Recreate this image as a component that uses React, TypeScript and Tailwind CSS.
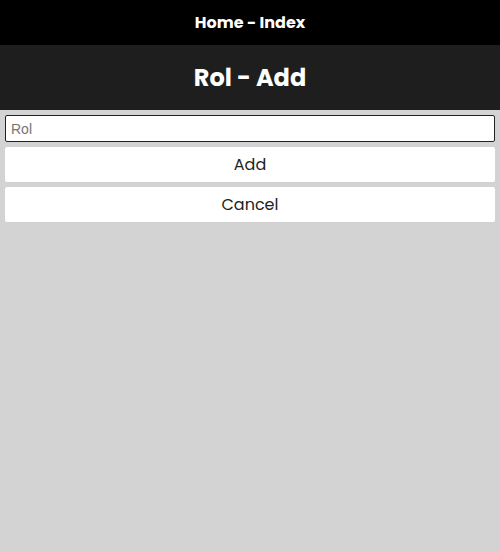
export default function App() {
  const font = { fontFamily: 'Poppins, Inter, "Open Sans", sans-serif' };
  return (
    <div className="min-h-[552px] bg-[#d3d3d3]" style={font}>
      <div className="h-[45px] bg-black flex items-center justify-center">
        <span className="text-white font-bold text-[16px]">Home - Index</span>
      </div>
      <div className="h-[65px] bg-[#1e1e1e] flex items-center justify-center">
        <h1 className="text-white font-bold text-[24px]">Rol - Add</h1>
      </div>
      <div className="flex flex-col gap-[5px] px-[5px] pt-[5px]">
        <input
          placeholder="Rol"
          className="h-[27px] bg-white border border-[#222] rounded-[2px] px-[5px] text-[14px] placeholder:text-[#757575] outline-none"
          style={{ fontFamily: '"Liberation Sans", Arial, sans-serif' }}
        />
        <button className="h-[35px] bg-white rounded-[2px] text-[16px] text-[#222]">Add</button>
        <button className="h-[35px] bg-white rounded-[2px] text-[16px] text-[#222]">Cancel</button>
      </div>
    </div>
  );
}
